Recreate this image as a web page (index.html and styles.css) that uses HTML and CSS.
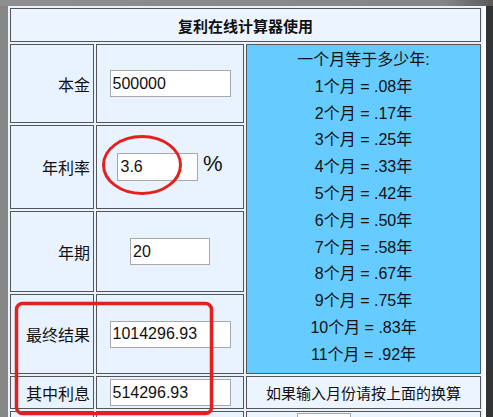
FILE: index.html
```html
<!DOCTYPE html>
<html lang="zh-CN">
<head>
<meta charset="utf-8">
<title>复利在线计算器使用</title>
<link rel="stylesheet" href="styles.css">
</head>
<body>
<div class="screen">
  <div class="topbar"></div>
  <div class="mid">
    <div class="leftbar"></div>
    <div class="content">
      <table class="calc">
        <colgroup>
          <col class="c-label">
          <col class="c-field">
          <col class="c-months">
        </colgroup>
        <tr class="r-head"><th colspan="3">复利在线计算器使用</th></tr>
        <tr class="r1">
          <td class="label">本金</td>
          <td class="field"><input class="in in-wide" value="500000"></td>
          <td class="months" rowspan="4">
            <div class="line">一个月等于多少年:</div>
            <div class="line">1个月 = .08年</div>
            <div class="line">2个月 = .17年</div>
            <div class="line">3个月 = .25年</div>
            <div class="line">4个月 = .33年</div>
            <div class="line">5个月 = .42年</div>
            <div class="line">6个月 = .50年</div>
            <div class="line">7个月 = .58年</div>
            <div class="line">8个月 = .67年</div>
            <div class="line">9个月 = .75年</div>
            <div class="line">10个月 = .83年</div>
            <div class="line">11个月 = .92年</div>
          </td>
        </tr>
        <tr class="r2">
          <td class="label">年利率</td>
          <td class="field"><input class="in in-rate" value="3.6"> <span class="pct">%</span></td>
        </tr>
        <tr class="r3">
          <td class="label">年期</td>
          <td class="field"><input class="in in-years" value="20"></td>
        </tr>
        <tr class="r4">
          <td class="label">最终结果</td>
          <td class="field"><input class="in in-wide" value="1014296.93"></td>
        </tr>
        <tr class="r5">
          <td class="label">其中利息</td>
          <td class="field"><input class="in in-wide" value="514296.93"></td>
          <td class="note">如果输入月份请按上面的换算</td>
        </tr>
        <tr class="r6">
          <td class="label"></td>
          <td class="field"></td>
          <td class="note note-btns"><span class="btn"></span></td>
        </tr>
      </table>
    </div>
    <div class="rightbar"></div>
  </div>
  <svg class="marks" width="493" height="417" viewBox="0 0 493 417">
    <ellipse cx="142" cy="165" rx="38.5" ry="28.5" fill="none" stroke="#e5201c" stroke-width="3"/>
    <rect x="16.5" y="303.5" width="195" height="110" rx="6" ry="6" fill="none" stroke="#e5201c" stroke-width="3.5"/>
  </svg>
</div>
</body>
</html>
```

FILE: styles.css
```css
html, body {
  margin: 0;
  padding: 0;
}

body {
  font-family: "Liberation Sans", "Noto Sans CJK SC", sans-serif;
  color: #111;
  background: #fff;
}

.screen {
  position: relative;
  width: 493px;
  height: 417px;
  overflow: hidden;
  display: flex;
  flex-direction: column;
}

.topbar {
  height: 6px;
  flex: none;
  background: linear-gradient(to right, #8e8e8e 0%, #858585 90%, #5a5a5a 100%);
}

.mid {
  flex: 1;
  display: flex;
  min-height: 0;
}

.leftbar {
  width: 8px;
  flex: none;
  background: #878787;
}

.content {
  width: 478px;
  flex: none;
  background: #fff;
}

.rightbar {
  flex: 1;
  background: #333;
}

.calc {
  table-layout: fixed;
  border-collapse: separate;
  border-spacing: 2px;
  width: 475px;
  background: #e9f3ff;
}

.c-label { width: 84px; }
.c-field { width: 148px; }
.c-months { width: 235px; }

.calc th,
.calc td {
  border: 1px solid #555;
  padding: 0;
  box-sizing: border-box;
}

.calc th {
  font-size: 15px;
  font-weight: bold;
  text-align: center;
  background: #ecf5ff;
}

.r-head { height: 34px; }
.r1 { height: 79px; }
.r2 { height: 84px; }
.r3 { height: 81px; }
.r4 { height: 80px; }
.r5 { height: 33px; }
.r6 { height: 30px; }

.label {
  font-size: 16px;
  text-align: right;
  padding-right: 3px !important;
  vertical-align: middle;
}

.field {
  text-align: center;
  vertical-align: middle;
  white-space: nowrap;
}

.in {
  box-sizing: border-box;
  height: 27px;
  border: 1px solid #a8a8a8;
  background: #fff;
  font-family: "Liberation Sans", sans-serif;
  font-size: 16px;
  color: #111;
  padding: 0 2px;
  margin: 0;
  vertical-align: middle;
  outline: none;
}

.in-wide { width: 121px; }
.in-rate { width: 81px; height: 28px; }
.in-years { width: 80px; }

.pct {
  font-size: 22px;
  vertical-align: middle;
  position: relative;
  top: -3px;
}

.months {
  background: #66ccff;
  vertical-align: top;
  text-align: center;
  padding-top: 2px !important;
  font-size: 16px;
}

.line {
  line-height: 26.8px;
  height: 26.8px;
}

.note {
  font-size: 15px;
  text-align: center;
  vertical-align: middle;
  background: #ecf5ff;
}

.note-btns {
  text-align: left;
  vertical-align: top;
  padding: 1px 0 0 50px !important;
}

.btn {
  display: inline-block;
  width: 52px;
  height: 24px;
  border: 1px solid #a8a8a8;
  background: #fff;
}

.marks {
  position: absolute;
  left: 0;
  top: 0;
  pointer-events: none;
}
```
